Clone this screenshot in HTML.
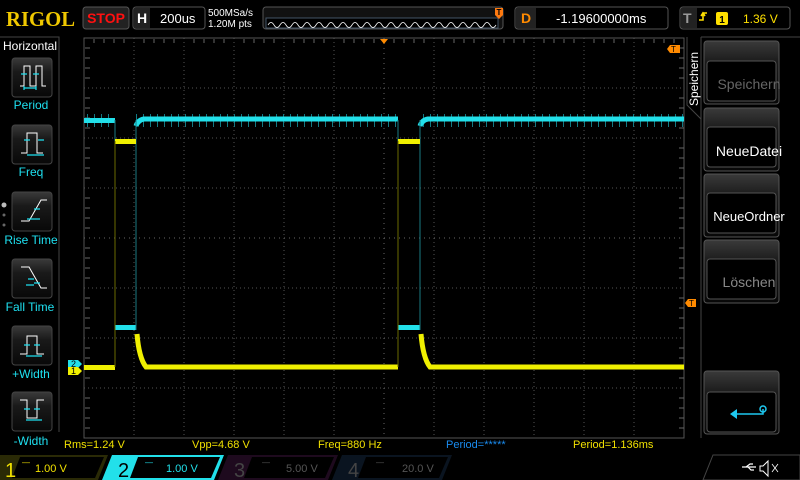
<!DOCTYPE html>
<html><head><meta charset="utf-8"><style>
body{margin:0;background:#000;width:800px;height:480px;overflow:hidden;font-family:"Liberation Sans",sans-serif}
svg{display:block}
</style></head><body>
<svg width="800" height="480" viewBox="0 0 800 480" xmlns="http://www.w3.org/2000/svg" font-family="Liberation Sans, sans-serif">
<defs>
<linearGradient id="btn" x1="0" y1="0" x2="0" y2="1"><stop offset="0" stop-color="#3a3a3a"/><stop offset="0.35" stop-color="#1a1a1a"/><stop offset="1" stop-color="#080808"/></linearGradient>
<pattern id="noise" x="84" y="0" width="7" height="20" patternUnits="userSpaceOnUse"><rect x="3" y="0" width="1" height="20" fill="#137a84"/></pattern>
</defs>
<rect width="800" height="480" fill="#000"/>
<!-- top bar -->
<text x="6" y="26" textLength="69" lengthAdjust="spacingAndGlyphs" style="font-family:'Liberation Serif',serif;font-weight:bold;font-size:21px" fill="#f0c800">RIGOL</text>
<rect x="83" y="7" width="46" height="22" rx="3" fill="#222" stroke="#555"/>
<text x="106" y="23" text-anchor="middle" font-weight="bold" font-size="14" fill="#ff1010">STOP</text>
<rect x="133" y="7" width="72" height="22" rx="3" fill="#000" stroke="#555"/>
<rect x="134" y="8" width="16" height="20" fill="#222"/>
<text x="137" y="23" font-weight="bold" font-size="14" fill="#fff">H</text>
<text x="160" y="23" font-size="13" fill="#fff">200us</text>
<text x="208" y="16" font-size="10" fill="#fff">500MSa/s</text>
<text x="208" y="27" font-size="10" fill="#fff">1.20M pts</text>
<rect x="263" y="7" width="240" height="22" rx="3" fill="#111" stroke="#555"/>
<rect x="266" y="18" width="232" height="10" fill="#000" stroke="#456" stroke-width="1"/>
<path d="M268 25 q3 -5 6 0 q3 5 6 0 q3 -5 6 0 q3 5 6 0 q3 -5 6 0 q3 5 6 0 q3 -5 6 0 q3 5 6 0 q3 -5 6 0 q3 5 6 0 q3 -5 6 0 q3 5 6 0 q3 -5 6 0 q3 5 6 0 q3 -5 6 0 q3 5 6 0 q3 -5 6 0 q3 5 6 0 q3 -5 6 0 q3 5 6 0 q3 -5 6 0 q3 5 6 0 q3 -5 6 0 q3 5 6 0 q3 -5 6 0 q3 5 6 0 q3 -5 6 0 q3 5 6 0 q3 -5 6 0 q3 5 6 0 q3 -5 6 0 q3 5 6 0 q3 -5 6 0 q3 5 6 0 q3 -5 6 0 q3 5 6 0 q3 -5 6 0 q3 5 6 0" fill="none" stroke="#fff" stroke-width="0.8"/>
<path d="M495 8 h8 v7 l-4 4 l-4 -4z" fill="#ff7a10"/><text x="499" y="15" text-anchor="middle" font-size="8" font-weight="bold" fill="#000">T</text>
<rect x="515" y="7" width="153" height="22" rx="3" fill="#000" stroke="#555"/>
<rect x="516" y="8" width="20" height="20" fill="#222"/>
<text x="521" y="23" font-weight="bold" font-size="14" fill="#ff8a00">D</text>
<text x="556" y="23" font-size="13" fill="#fff">-1.19600000ms</text>
<rect x="680" y="7" width="110" height="22" rx="3" fill="#000" stroke="#555"/>
<rect x="681" y="8" width="16" height="20" fill="#222"/>
<text x="683" y="23" font-weight="bold" font-size="14" fill="#999">T</text>
<path d="M699 20 h4 v-7 h4 M701 16 l2 -3 l2 3" stroke="#ffe000" stroke-width="1.6" fill="none"/>
<rect x="716" y="12" width="12" height="13" rx="2" fill="#ffe000"/><text x="722" y="23" text-anchor="middle" font-size="10" font-weight="bold" fill="#000">1</text>
<text x="743" y="23" font-size="12" fill="#ffe000">1.36 V</text>
<!-- left panel -->
<path d="M0 37 H59 V432" fill="none" stroke="#444"/>
<text x="3" y="50" font-size="12" fill="#fff">Horizontal</text>
<g fill="url(#btn)" stroke="#444">
<rect x="12" y="58" width="40" height="39" rx="3"/><rect x="12" y="125" width="40" height="39" rx="3"/><rect x="12" y="192" width="40" height="39" rx="3"/><rect x="12" y="259" width="40" height="39" rx="3"/><rect x="12" y="326" width="40" height="39" rx="3"/><rect x="12" y="392" width="40" height="39" rx="3"/>
</g>
<g fill="none" stroke="#fff" stroke-width="1">
<path d="M20 86 h4 v-20 h6 v20 h6 v-20 h6 v20 h4"/>
<path d="M21 153 h6 v-20 h10 v20 h6"/>
<path d="M21 221 h8 l12 -21 h6"/>
<path d="M21 267 h8 l12 21 h6"/>
<path d="M20 354 h7 v-18 h10 v18 h7"/>
<path d="M20 400 h7 v18 h10 v-18 h7"/>
</g>
<g fill="none" stroke="#1ee0f0" stroke-width="1.2">
<path d="M21 74 h6 M33 74 h6 M24 88 h12 M24 86 v4 M36 86 v4"/>
<path d="M24 140 h6 M38 140 h6 M27 155 h17"/>
<path d="M34 209 h6 M27 219 h6 M32 219 h8"/>
<path d="M28 279 h6 M26 285 h8 M34 283 h6"/>
<path d="M24 345 h6 M34 345 h6 M26 356 h16"/>
<path d="M24 409 h6 M34 409 h6 M26 420 h16"/>
</g>
<g font-size="12" fill="#1ee0f0" text-anchor="middle">
<text x="31" y="109">Period</text><text x="31" y="176">Freq</text><text x="31" y="244">Rise Time</text><text x="30" y="311">Fall Time</text><text x="31" y="378">+Width</text><text x="31" y="445">-Width</text>
</g>
<circle cx="4" cy="205" r="2.5" fill="#bbb"/><circle cx="4" cy="215" r="1.5" fill="#666"/><circle cx="4" cy="225" r="1.5" fill="#666"/>
<!-- grid -->
<rect x="84" y="38" width="600" height="400" fill="none" stroke="#555"/>
<g stroke="#555" stroke-dasharray="1 3" stroke-width="1">
<path d="M134 38V438M184 38V438M234 38V438M284 38V438M334 38V438M434 38V438M484 38V438M534 38V438M584 38V438M634 38V438"/>
<path d="M84 88H684M84 138H684M84 188H684M84 288H684M84 338H684M84 388H684"/>
</g>
<g stroke="#666" stroke-width="1">
<path d="M84 238H684" stroke-dasharray="1 4"/>
<path d="M384 38V438" stroke-dasharray="1 4"/>
</g>
<g stroke="#666">
<path d="M85 48h5M85 58h5M85 68h5M85 78h5M85 98h5M85 108h5M85 118h5M85 128h5M85 148h5M85 158h5M85 168h5M85 178h5M85 198h5M85 208h5M85 218h5M85 228h5M85 248h5M85 258h5M85 268h5M85 278h5M85 298h5M85 308h5M85 318h5M85 328h5M85 348h5M85 358h5M85 368h5M85 378h5M85 398h5M85 408h5M85 418h5M85 428h5"/>
<path d="M679 48h5M679 58h5M679 68h5M679 78h5M679 98h5M679 108h5M679 118h5M679 128h5M679 148h5M679 158h5M679 168h5M679 178h5M679 198h5M679 208h5M679 218h5M679 228h5M679 248h5M679 258h5M679 268h5M679 278h5M679 298h5M679 308h5M679 318h5M679 328h5M679 348h5M679 358h5M679 368h5M679 378h5M679 398h5M679 408h5M679 418h5M679 428h5"/>
</g>
<path d="M94 39v4M104 39v4M114 39v4M124 39v4M144 39v4M154 39v4M164 39v4M174 39v4M194 39v4M204 39v4M214 39v4M224 39v4M244 39v4M254 39v4M264 39v4M274 39v4M294 39v4M304 39v4M314 39v4M324 39v4M344 39v4M354 39v4M364 39v4M374 39v4M394 39v4M404 39v4M414 39v4M424 39v4M444 39v4M454 39v4M464 39v4M474 39v4M494 39v4M504 39v4M514 39v4M524 39v4M544 39v4M554 39v4M564 39v4M574 39v4M594 39v4M604 39v4M614 39v4M624 39v4M644 39v4M654 39v4M664 39v4M674 39v4" stroke="#666"/>
<path d="M380 39h8l-4 5z" fill="#ff8a00"/>
<!-- waveforms -->
<g>
<rect x="84" y="114" width="600" height="13" fill="url(#noise)"/>
<rect x="115" y="110" width="21" height="20" fill="#000"/>
<rect x="398" y="110" width="22" height="20" fill="#000"/>
<rect x="84" y="118" width="31" height="5" fill="#22e0ea"/>
<path d="M136 126 q2 -6 8 -7 H398" stroke="#22e0ea" stroke-width="5" fill="none"/>
<path d="M420 126 q2 -6 8 -7 H684" stroke="#22e0ea" stroke-width="5" fill="none"/>
<rect x="115" y="325" width="21" height="5" fill="#22e0ea"/>
<rect x="398" y="325" width="22" height="5" fill="#22e0ea"/>
<path d="M115 120V330M136 120V330M398 120V330M420 120V330" stroke="#1a7a82" stroke-width="1"/>
<rect x="84" y="365" width="31" height="5" fill="#f0f000"/>
<rect x="115" y="139" width="21" height="5" fill="#f0f000"/>
<rect x="398" y="139" width="22" height="5" fill="#f0f000"/>
<path d="M137 334 q2 24 9 33 H398" stroke="#f0f000" stroke-width="5" fill="none"/>
<path d="M421 334 q2 24 9 33 H684" stroke="#f0f000" stroke-width="5" fill="none"/>
<path d="M115 141V367M398 141V367" stroke="#6a6a00" stroke-width="1"/>
</g>
<path d="M68 360h10l4 4l-4 4h-10z" fill="#22e0ea"/><text x="71" y="367" font-size="9" fill="#000">2</text>
<path d="M68 367h10l4 4l-4 4h-10z" fill="#f0f000"/><text x="71" y="374" font-size="9" fill="#000">1</text>
<path d="M670 45h10v8h-10z M670 45l-3 4l3 4" fill="#ff8a00"/><text x="671" y="52" font-size="8" fill="#000">T</text>
<path d="M688 299h8v8h-8l-3 -4z" fill="#ff8a00"/><text x="689" y="306" font-size="8" fill="#000">T</text>
<!-- right panel -->
<path d="M701 37 V438 M701 37 H800" fill="none" stroke="#444"/>
<path d="M687 37 V105 L701 119" fill="none" stroke="#444"/>
<text transform="translate(698,106) rotate(-90)" font-size="12" fill="#fff">Speichern</text>
<g fill="url(#btn)" stroke="#555">
<rect x="704" y="41" width="75" height="63" rx="3"/><rect x="704" y="108" width="75" height="63" rx="3"/><rect x="704" y="174" width="75" height="63" rx="3"/><rect x="704" y="240" width="75" height="63" rx="3"/><rect x="704" y="371" width="75" height="63" rx="3"/>
</g>
<g fill="#000" stroke="#555">
<rect x="707" y="61" width="69" height="40" rx="3"/><rect x="707" y="127" width="69" height="40" rx="3"/><rect x="707" y="193" width="69" height="40" rx="3"/><rect x="707" y="259" width="69" height="40" rx="3"/><rect x="707" y="392" width="69" height="40" rx="3"/>
</g>
<g font-size="14" text-anchor="middle">
<text x="749" y="89" fill="#666">Speichern</text>
<text x="749" y="156" fill="#fff">NeueDatei</text>
<text x="749" y="221" fill="#fff" font-size="13">NeueOrdner</text>
<text x="749" y="287" fill="#888">Löschen</text>
</g>
<path d="M763 409 V414 H735" stroke="#1ec8f0" stroke-width="1.5" fill="none"/>
<path d="M730 414 l7 -5 v10z" fill="#1ec8f0"/>
<circle cx="763" cy="409" r="3" fill="none" stroke="#1ec8f0" stroke-width="1.5"/>
<!-- measurements -->
<g font-size="11">
<text x="64" y="448" fill="#f0e000">Rms=1.24 V</text>
<text x="192" y="448" fill="#f0e000">Vpp=4.68 V</text>
<text x="318" y="448" fill="#f0e000">Freq=880 Hz</text>
<text x="446" y="448" fill="#1a8cf0">Period=*****</text>
<text x="573" y="448" fill="#f0e000">Period=1.136ms</text>
</g>
<!-- channel bar -->
<path d="M0 455 H108 L98 480 H0z" fill="#2a2a06"/>
<path d="M20 457 H104 L95 478 H12z" fill="#000"/>
<text x="5" y="477" font-size="20" fill="#f0e000">1</text>
<text x="22" y="465" font-size="8" fill="#f0e000">—</text>
<text x="35" y="472" font-size="11" fill="#f0e000">1.00 V</text>
<path d="M112 455 H224 L214 480 H102z" fill="#22e0ea"/>
<path d="M138 457 H220 L211 478 H130z" fill="#000"/>
<text x="118" y="477" font-size="20" fill="#000">2</text>
<text x="145" y="465" font-size="8" fill="#22e0ea">—</text>
<text x="166" y="472" font-size="11" fill="#22e0ea">1.00 V</text>
<path d="M228 455 H338 L328 480 H218z" fill="#1e0a1e"/>
<path d="M252 457 H334 L325 478 H244z" fill="#000"/>
<text x="234" y="477" font-size="20" fill="#444">3</text>
<text x="262" y="465" font-size="8" fill="#555">—</text>
<text x="286" y="472" font-size="11" fill="#555">5.00 V</text>
<path d="M342 455 H452 L442 480 H332z" fill="#0a1420"/>
<path d="M366 457 H448 L439 478 H358z" fill="#000"/>
<text x="348" y="477" font-size="20" fill="#444">4</text>
<text x="376" y="465" font-size="8" fill="#555">—</text>
<text x="402" y="472" font-size="11" fill="#555">20.0 V</text>
<path d="M713 455 H800 V480 H703z" fill="none" stroke="#444"/>
<path d="M742 467 h14 M746 467 l4 -3 h3 M748 467 l3 3 h3" stroke="#fff" stroke-width="1.2" fill="none"/>
<path d="M768 461 l-5 5 h-3 v5 h3 l5 5z" fill="none" stroke="#fff"/>
<path d="M772 464 l6 8 M778 464 l-6 8" stroke="#fff" stroke-width="0.8"/>
</svg>
</body></html>
